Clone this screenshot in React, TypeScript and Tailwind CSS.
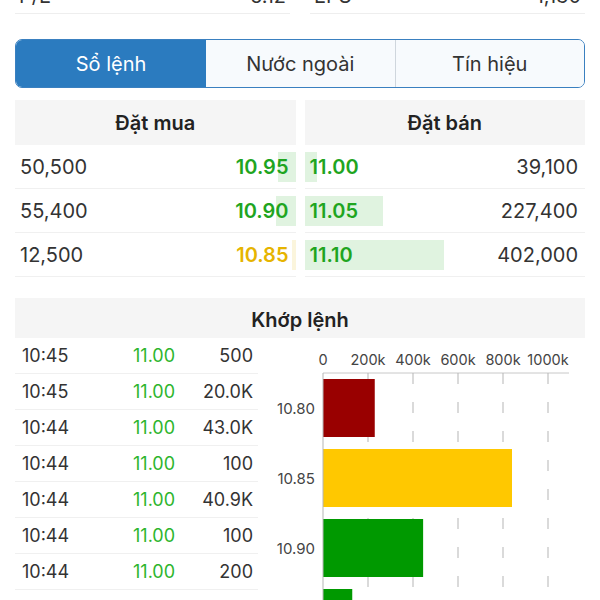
import React from "react";

const font = { fontFamily: "Inter, 'Noto Sans', sans-serif" };

interface BookRow {
    qty: string;
    price: string;
    bar: number;
    tone: "green" | "yellow";
}

const buys: BookRow[] = [
    { qty: "50,500", price: "10.95", bar: 18, tone: "green" },
    { qty: "55,400", price: "10.90", bar: 20, tone: "green" },
    { qty: "12,500", price: "10.85", bar: 4, tone: "yellow" },
];

const sells: BookRow[] = [
    { qty: "39,100", price: "11.00", bar: 12, tone: "green" },
    { qty: "227,400", price: "11.05", bar: 78, tone: "green" },
    { qty: "402,000", price: "11.10", bar: 139, tone: "green" },
];

const trades = [
    { time: "10:45", price: "11.00", vol: "500" },
    { time: "10:45", price: "11.00", vol: "20.0K" },
    { time: "10:44", price: "11.00", vol: "43.0K" },
    { time: "10:44", price: "11.00", vol: "100" },
    { time: "10:44", price: "11.00", vol: "40.9K" },
    { time: "10:44", price: "11.00", vol: "100" },
    { time: "10:44", price: "11.00", vol: "200" },
    { time: "10:44", price: "11.00", vol: "300" },
];

const volumes = [
    { price: "10.80", vol: 230000, color: "#990000" },
    { price: "10.85", vol: 840000, color: "#ffc800" },
    { price: "10.90", vol: 445000, color: "#009900" },
    { price: "10.95", vol: 130000, color: "#009900" },
];

function VolumeChart() {
    const x0 = 65;
    const scale = 45 / 200000;
    const ticks = [0, 200000, 400000, 600000, 800000, 1000000];
    return (
        <svg width="327" height="262" style={font}>
            {ticks.map((t) => (
                <text key={t} x={x0 + t * scale} y={27} textAnchor="middle" fontSize="14.5" fill="#444">
                    {t === 0 ? "0" : `${t / 1000}k`}
                </text>
            ))}
            <line x1={x0} y1={35} x2={311} y2={35} stroke="#c8c8c8" strokeWidth="1" />
            {ticks.slice(1).map((t) => (
                <line
                    key={t}
                    x1={x0 + t * scale}
                    y1={35}
                    x2={x0 + t * scale}
                    y2={262}
                    stroke="#b5b5b5"
                    strokeWidth="1"
                    strokeDasharray="11 18"
                />
            ))}
            {volumes.map((v, i) => (
                <g key={v.price}>
                    <rect x={x0} y={41 + i * 70} width={v.vol * scale} height={58} fill={v.color} />
                    <text x={57} y={41 + i * 70 + 35} textAnchor="end" fontSize="15" fill="#444">
                        {v.price}
                    </text>
                </g>
            ))}
            <line x1={x0} y1={35} x2={x0} y2={262} stroke="#b5b5b5" strokeWidth="1" />
        </svg>
    );
}

export default function App() {
    return (
        <div className="w-[600px] h-[600px] overflow-hidden bg-white px-[15px] text-[#333]" style={font}>
            {/* stats strip, scrolled mostly off screen */}
            <div className="-mt-[15px] grid grid-cols-2 gap-[20px] text-[20px]">
                <div className="flex h-[29px] items-center justify-between border-b border-[#eeeeee] px-[4px] pb-[6px]">
                    <span>P/E</span>
                    <span>6.12</span>
                </div>
                <div className="flex h-[29px] items-center justify-between border-b border-[#eeeeee] px-[4px] pb-[6px]">
                    <span>EPS</span>
                    <span>1,130</span>
                </div>
            </div>

            {/* segmented tabs */}
            <div className="mt-[25px] flex h-[49px] overflow-hidden rounded-[7px] border-[1.5px] border-[#3a80c0] text-[20px]">
                <div className="flex w-[190px] items-center justify-center bg-[#2b7bbf] text-white">Sổ lệnh</div>
                <div className="flex flex-1 items-center justify-center bg-[#f7fafd] text-[#333]">Nước ngoài</div>
                <div className="flex flex-1 items-center justify-center border-l border-[#cfd6dd] bg-[#f7fafd] text-[#333]">
                    Tín hiệu
                </div>
            </div>

            {/* order book */}
            <div className="mt-[12px] grid grid-cols-2 gap-[9px]">
                <div>
                    <div className="flex h-[45px] items-center justify-center bg-[#f5f5f5] text-[20px] font-semibold text-[#222]">
                        Đặt mua
                    </div>
                    {buys.map((r) => (
                        <div key={r.price} className="relative flex h-[44px] items-center justify-between border-b border-[#f0f0f0] pl-[5px] pr-[7px] text-[20px]">
                            <div
                                className={`absolute right-0 top-[7px] bottom-[6px] ${r.tone === "yellow" ? "bg-[#fbf5dc]" : "bg-[#e0f3e0]"}`}
                                style={{ width: r.bar }}
                            />
                            <span className="relative">{r.qty}</span>
                            <span className={`relative font-semibold ${r.tone === "yellow" ? "text-[#e6b400]" : "text-[#1fa51f]"}`}>
                                {r.price}
                            </span>
                        </div>
                    ))}
                </div>
                <div>
                    <div className="flex h-[45px] items-center justify-center bg-[#f5f5f5] text-[20px] font-semibold text-[#222]">
                        Đặt bán
                    </div>
                    {sells.map((r) => (
                        <div key={r.price} className="relative flex h-[44px] items-center justify-between border-b border-[#f0f0f0] pl-[5px] pr-[7px] text-[20px]">
                            <div className="absolute left-0 top-[7px] bottom-[6px] bg-[#e0f3e0]" style={{ width: r.bar }} />
                            <span className="relative font-semibold text-[#1fa51f]">{r.price}</span>
                            <span className="relative">{r.qty}</span>
                        </div>
                    ))}
                </div>
            </div>

            {/* matched orders */}
            <div className="mt-[21px]">
                <div className="flex h-[40px] items-center justify-center bg-[#f5f5f5] pt-[4px] text-[20px] font-semibold text-[#222]">
                    Khớp lệnh
                </div>
                <div className="flex">
                    <div className="w-[243px]">
                        {trades.map((t, i) => (
                            <div key={i} className="flex h-[36px] items-center border-b border-[#f0f0f0] pl-[7px] pr-[5px] text-[18px]">
                                <span className="w-[111px]">{t.time}</span>
                                <span className="w-[50px] text-[#2db52d]">{t.price}</span>
                                <span className="flex-1 text-right">{t.vol}</span>
                            </div>
                        ))}
                    </div>
                    <div className="flex-1">
                        <VolumeChart />
                    </div>
                </div>
            </div>
        </div>
    );
}
